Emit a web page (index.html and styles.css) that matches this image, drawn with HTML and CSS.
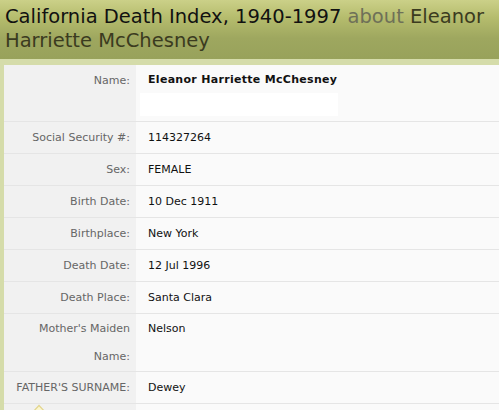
FILE: index.html
```html
<!DOCTYPE html>
<html>
<head>
<meta charset="utf-8">
<link rel="stylesheet" href="styles.css">
</head>
<body>
<div class="page">
  <header class="head">
    <h1 class="title"><span class="db">California Death Index, 1940-1997</span> <span class="about">about</span> <span class="who">Eleanor</span> <span class="who">Harriette McChesney</span></h1>
  </header>
  <div class="frame">
    <table class="rec">
      <tr class="name-row">
        <th>Name:</th>
        <td><div class="nm">Eleanor Harriette McChesney</div><div class="blank"></div></td>
      </tr>
      <tr><th>Social Security #:</th><td>114327264</td></tr>
      <tr><th>Sex:</th><td>FEMALE</td></tr>
      <tr><th>Birth Date:</th><td>10 Dec 1911</td></tr>
      <tr><th>Birthplace:</th><td>New York</td></tr>
      <tr><th>Death Date:</th><td>12 Jul 1996</td></tr>
      <tr><th>Death Place:</th><td>Santa Clara</td></tr>
      <tr class="two"><th>Mother's Maiden Name:</th><td>Nelson</td></tr>
      <tr><th>FATHER'S SURNAME:</th><td>Dewey</td></tr>
      <tr class="last"><th><svg class="tri" width="18" height="10" viewBox="0 0 18 10"><path d="M1 10 L9 1.5 L17 10" fill="#fbf6cf" stroke="#e2d58e" stroke-width="1.2"/></svg></th><td></td></tr>
    </table>
  </div>
</div>
</body>
</html>
```

FILE: styles.css
```css
html, body {
  margin: 0;
  padding: 0;
  background: #fafafa;
}
.page {
  width: 499px;
  height: 410px;
  overflow: hidden;
  font-family: "DejaVu Sans", Verdana, sans-serif;
}
.head {
  height: 59px;
  background: linear-gradient(to bottom, #cbd088 0%, #b5bc6d 30%, #9ea75f 65%, #98a25b 100%);
  padding: 0 0 0 5px;
  box-sizing: border-box;
}
.title {
  margin: 0;
  padding-top: 5px;
  font-weight: normal;
  font-size: 19.5px;
  line-height: 24px;
  color: #111;
}
.db { color: #111; }
.about { color: #6e7058; }
.who { color: #3b3b1f; }
.frame {
  border-top: 6px solid #d5dcaa;
  border-left: 4px solid #d5dcaa;
  background: #fafafa;
}
.rec {
  border-collapse: collapse;
  width: 100%;
  font-size: 11px;
}
.rec th {
  width: 120px;
  background: #f1f1f1;
  color: #666;
  font-weight: normal;
  text-align: right;
  vertical-align: top;
  padding: 2px 6px 1px 6px;
  line-height: 28px;
  border-bottom: 1px solid #e5e5e5;
}
.rec td {
  color: #111;
  vertical-align: top;
  padding: 2px 0 1px 12px;
  line-height: 28px;
  border-bottom: 1px solid #e5e5e5;
}
.name-row th, .name-row td { padding-bottom: 5px; }
.two th, .two td { padding-top: 1px; padding-bottom: 0; }
.nm {
  font-weight: bold;
  line-height: 26px;
  letter-spacing: 0.3px;
}
.blank {
  width: 198px;
  height: 23px;
  background: #fff;
  margin-left: -8px;
}
.last th, .last td { border-bottom: none; }
.tri {
  display: block;
  margin: -2px 0 0 20px;
}
```
